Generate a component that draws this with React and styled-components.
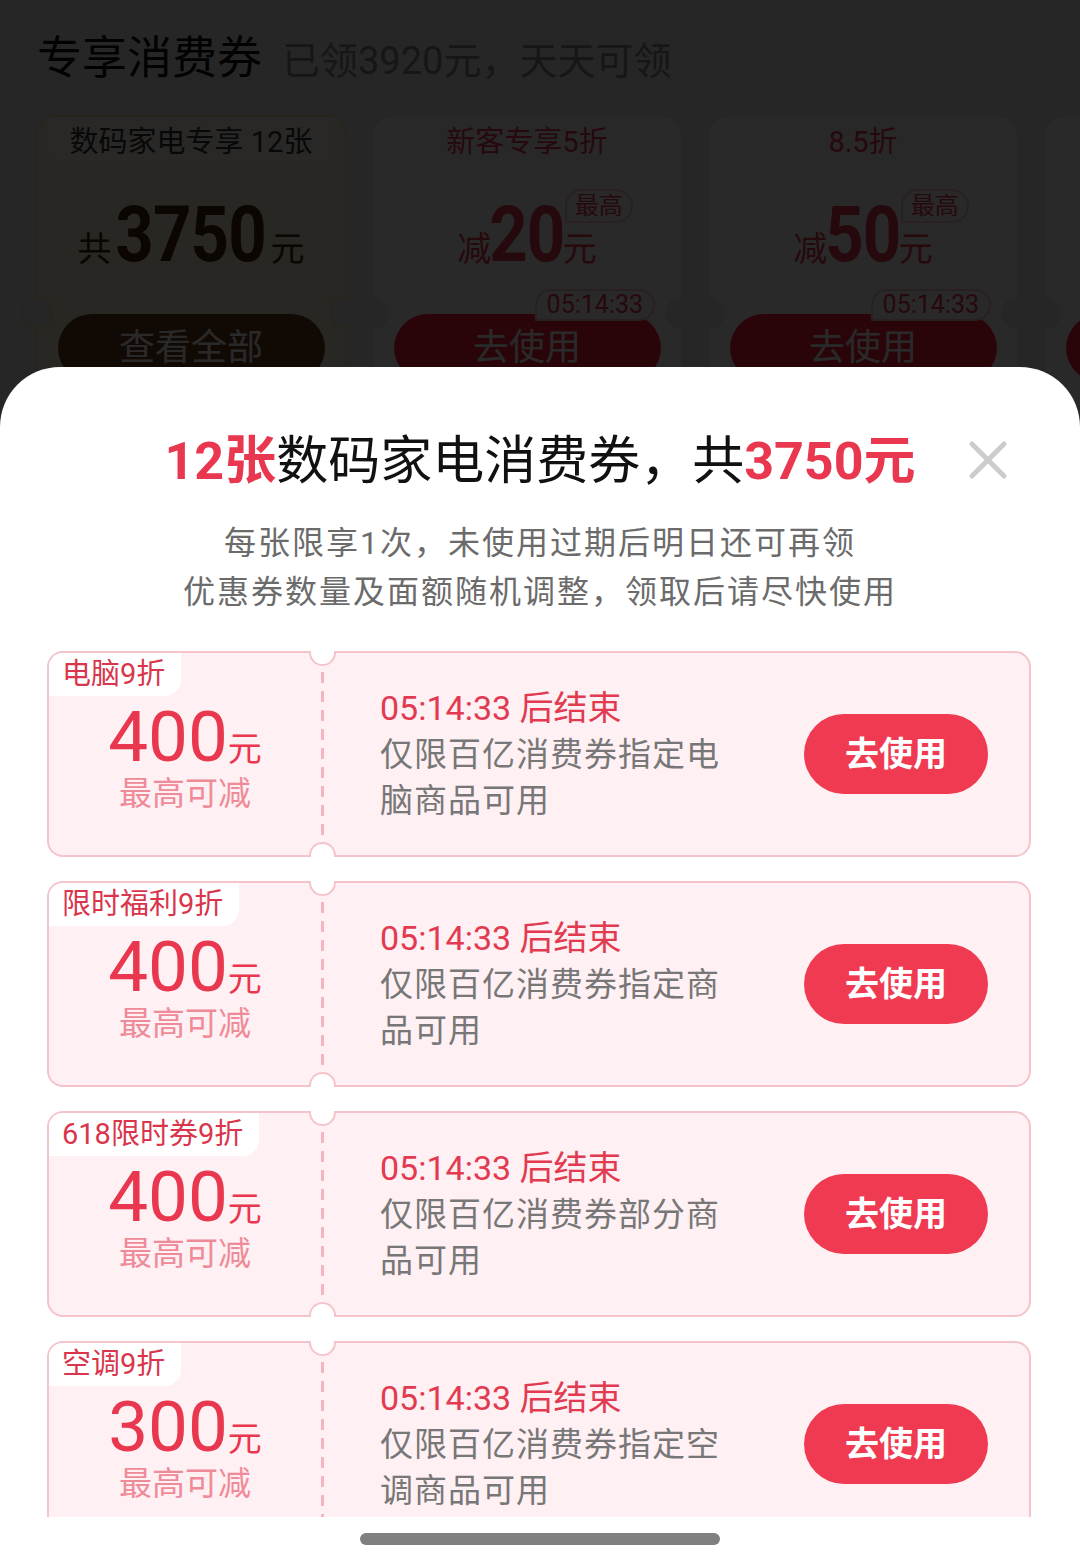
import styled, { createGlobalStyle, css } from "styled-components";

const GlobalStyle = createGlobalStyle`
  body {
    margin: 0;
    font-family: Roboto, "Noto Sans CJK SC", sans-serif;
  }
`;

const Page = styled.div`
  position: relative;
  width: 1080px;
  height: 1565px;
  overflow: hidden;
  background: #ececec;
`;

const Header = styled.div`
  display: flex;
  align-items: baseline;
  gap: 20px;
  padding: 29px 0 0 37px;
  height: 60px;
`;

const HeaderTitle = styled.div`
  font-size: 45px;
  line-height: 60px;
  color: #111;
`;

const HeaderSub = styled.div`
  font-size: 38px;
  line-height: 60px;
  color: #8a8a8a;
`;

const TopRow = styled.div`
  display: flex;
  gap: 24px;
  padding: 26px 0 0 35px;
`;

const TopCardBox = styled.div`
  position: relative;
  flex-shrink: 0;
  width: 312px;
  height: 300px;
  box-sizing: border-box;
  border-radius: 20px;
  border: 2px solid ${(p) => (p.$gold ? "#f3dfae" : "#f1e4e6")};
  background: ${(p) => (p.$gold ? "#fff3d6" : "#ffffff")};
  display: flex;
  flex-direction: column;
  align-items: center;

  &::before,
  &::after {
    content: "";
    position: absolute;
    top: 180px;
    width: 28px;
    height: 28px;
    border-radius: 50%;
    background: #ececec;
    border: 2px solid ${(p) => (p.$gold ? "#f3dfae" : "#f1e4e6")};
  }
  &::before {
    left: -16px;
  }
  &::after {
    right: -16px;
  }
`;

const TopTab = styled.div`
  height: 50px;
  padding: 0 22px;
  border-radius: 0 0 16px 16px;
  background: ${(p) => (p.$gold ? "#fff9ea" : "#fdf6f7")};
  font-size: 29px;
  line-height: 50px;
  color: ${(p) => (p.$gold ? "#333" : "#e23a50")};
`;

const TopAmount = styled.div`
  position: relative;
  margin-top: 28px;
  height: 80px;
  display: flex;
  align-items: baseline;
  color: ${(p) => (p.$gold ? "#4a2610" : "#e8374e")};
`;

const TopUnit = styled.span`
  font-size: 34px;
  line-height: 80px;
`;

const TopNumber = styled.span`
  font-size: 78px;
  font-weight: 700;
  line-height: 80px;
  letter-spacing: -1px;
  display: inline-block;
  transform: scaleX(0.86);
  margin: 0 -8px;
`;

const MaxBadge = styled.span`
  position: absolute;
  right: -36px;
  top: -6px;
  padding: 0 8px;
  border: 2px solid #f6c7cd;
  border-radius: 18px 18px 18px 0;
  background: #fff;
  font-size: 24px;
  line-height: 30px;
  color: #e8374e;
`;

const CountRow = styled.div`
  align-self: stretch;
  display: flex;
  justify-content: flex-end;
  margin-top: 14px;
  padding-right: 26px;
  height: 32px;
  position: relative;
  z-index: 1;
`;

const CountBadge = styled.div`
  padding: 0 10px;
  border: 2px solid #f6c7cd;
  border-radius: 16px 16px 16px 0;
  background: #fff;
  font-size: 25px;
  line-height: 28px;
  color: #e8374e;
`;

const TopButton = styled.div`
  margin-top: -7px;
  width: 267px;
  height: 68px;
  border-radius: 34px;
  background: ${(p) => (p.$gold ? "#6b3a1e" : "#ff2040")};
  color: #fff;
  font-size: 36px;
  line-height: 68px;
  text-align: center;
`;

const Overlay = styled.div`
  position: absolute;
  inset: 0;
  z-index: 5;
  background: rgba(0, 0, 0, 0.84);
`;

const Sheet = styled.div`
  position: absolute;
  z-index: 6;
  top: 367px;
  left: 0;
  right: 0;
  bottom: 0;
  background: #fff;
  border-radius: 60px 60px 0 0;
  display: flex;
  flex-direction: column;
  align-items: center;
  padding-top: 63px;
`;

const Title = styled.div`
  font-size: 52px;
  line-height: 64px;
  color: #111;
  white-space: nowrap;
`;

const Red = styled.span`
  color: #e8374e;
  font-weight: 700;
`;

const CloseButton = styled.div`
  position: absolute;
  top: 73px;
  right: 72px;
  width: 40px;
  height: 40px;
`;

const Subtitle = styled.div`
  margin-top: 25px;
  font-size: 32px;
  line-height: 49px;
  letter-spacing: 2px;
  color: #6b6b6b;
  text-align: center;
`;

const List = styled.div`
  margin-top: 34px;
  height: 866px;
  width: 1080px;
  box-sizing: border-box;
  padding: 0 49px 0 47px;
  overflow: hidden;
  display: flex;
  flex-direction: column;
  gap: 24px;
`;

const Card = styled.div`
  position: relative;
  flex-shrink: 0;
  height: 206px;
  box-sizing: border-box;
  border: 2px solid #f5c4cb;
  border-radius: 16px;
  background: #fff0f3;
  display: flex;
  align-items: center;
`;

const Tag = styled.div`
  position: absolute;
  top: 0;
  left: 0;
  height: 43px;
  padding: 0 16px 0 13px;
  border-radius: 14px 0 16px 0;
  background: #fff;
  font-size: 29px;
  line-height: 43px;
  color: #d9354c;
`;

const Left = styled.div`
  width: 272px;
  display: flex;
  flex-direction: column;
  align-items: center;
  padding-top: 12px;
`;

const Amount = styled.div`
  color: #e8374e;
  display: flex;
  align-items: baseline;
  line-height: 66px;
`;

const AmountNum = styled.span`
  font-size: 71px;
`;

const AmountUnit = styled.span`
  font-size: 34px;
`;

const AmountHint = styled.div`
  margin-top: -11px;
  font-size: 33px;
  line-height: 46px;
  color: #ef8a99;
`;

const notch = css`
  content: "";
  position: absolute;
  left: -12px;
  width: 23px;
  height: 13px;
  background: #fff;
  border: 2px solid #f5c4cb;
`;

const Divider = styled.div`
  position: relative;
  align-self: stretch;
  width: 3px;
  padding: 19px 0;
  box-sizing: border-box;
  background: repeating-linear-gradient(
    to bottom,
    #f5b5bf 0 11px,
    transparent 11px 19px
  );
  background-origin: content-box;
  background-clip: content-box;

  &::before {
    ${notch};
    top: -2px;
    border-top: none;
    border-radius: 0 0 14px 14px;
  }
  &::after {
    ${notch};
    bottom: -2px;
    border-bottom: none;
    border-radius: 14px 14px 0 0;
  }
`;

const Right = styled.div`
  width: 350px;
  padding-left: 56px;
`;

const Countdown = styled.div`
  font-size: 34px;
  line-height: 48px;
  color: #e23a50;
`;

const Desc = styled.div`
  font-size: 33px;
  line-height: 46px;
  letter-spacing: 1px;
  color: #777;
`;

const UseButton = styled.div`
  margin-left: auto;
  margin-right: 41px;
  width: 184px;
  height: 80px;
  border-radius: 40px;
  background: #f03a51;
  color: #fff;
  font-size: 34px;
  font-weight: 700;
  line-height: 80px;
  text-align: center;
`;

const HomeBar = styled.div`
  margin-top: 16px;
  width: 360px;
  height: 12px;
  border-radius: 6px;
  background: #808080;
`;

const topCards = [
  { gold: true, tab: "数码家电专享 12张", prefix: "共", num: "3750", btn: "查看全部" },
  { tab: "新客专享5折", prefix: "减", num: "20", badge: true, count: "05:14:33", btn: "去使用" },
  { tab: "8.5折", prefix: "减", num: "50", badge: true, count: "05:14:33", btn: "去使用" },
  { tab: "", prefix: "", num: "", btn: "" },
];

const coupons = [
  { tag: "电脑9折", amount: "400", desc: "仅限百亿消费券指定电脑商品可用" },
  { tag: "限时福利9折", amount: "400", desc: "仅限百亿消费券指定商品可用" },
  { tag: "618限时券9折", amount: "400", desc: "仅限百亿消费券部分商品可用" },
  { tag: "空调9折", amount: "300", desc: "仅限百亿消费券指定空调商品可用" },
];

const TopCard = ({ card }) => (
  <TopCardBox $gold={card.gold}>
    <TopTab $gold={card.gold}>{card.tab}</TopTab>
    <TopAmount $gold={card.gold}>
      {card.prefix && <TopUnit>{card.prefix}</TopUnit>}
      <TopNumber>{card.num}</TopNumber>
      {card.num && <TopUnit>元</TopUnit>}
      {card.badge && <MaxBadge>最高</MaxBadge>}
    </TopAmount>
    <CountRow>{card.count && <CountBadge>{card.count}</CountBadge>}</CountRow>
    <TopButton $gold={card.gold}>{card.btn}</TopButton>
  </TopCardBox>
);

const Coupon = ({ coupon }) => (
  <Card>
    <Tag>{coupon.tag}</Tag>
    <Left>
      <Amount>
        <AmountNum>{coupon.amount}</AmountNum>
        <AmountUnit>元</AmountUnit>
      </Amount>
      <AmountHint>最高可减</AmountHint>
    </Left>
    <Divider />
    <Right>
      <Countdown>05:14:33 后结束</Countdown>
      <Desc>{coupon.desc}</Desc>
    </Right>
    <UseButton>去使用</UseButton>
  </Card>
);

const App = () => {
  return (
    <>
      <GlobalStyle />
      <Page>
        <Header>
          <HeaderTitle>专享消费券</HeaderTitle>
          <HeaderSub>已领3920元，天天可领</HeaderSub>
        </Header>
        <TopRow>
          {topCards.map((c, i) => (
            <TopCard key={i} card={c} />
          ))}
        </TopRow>
        <Overlay />
        <Sheet>
          <Title>
            <Red>12张</Red>数码家电消费券，共<Red>3750元</Red>
          </Title>
          <CloseButton>
            <svg width="40" height="40" viewBox="0 0 40 40">
              <path
                d="M4 4 L36 36 M36 4 L4 36"
                stroke="#cccccc"
                strokeWidth="5"
                strokeLinecap="round"
              />
            </svg>
          </CloseButton>
          <Subtitle>
            每张限享1次，未使用过期后明日还可再领
            <br />
            优惠券数量及面额随机调整，领取后请尽快使用
          </Subtitle>
          <List>
            {coupons.map((c, i) => (
              <Coupon key={i} coupon={c} />
            ))}
          </List>
          <HomeBar />
        </Sheet>
      </Page>
    </>
  );
};

export default App;
